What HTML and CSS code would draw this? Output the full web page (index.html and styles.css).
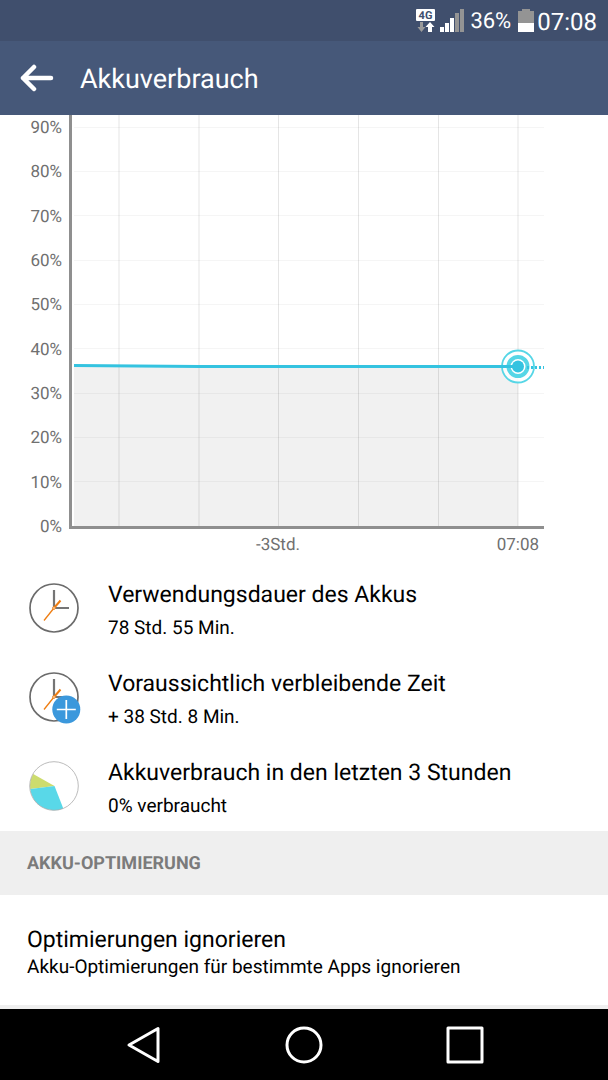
FILE: index.html
```html
<!DOCTYPE html>
<html lang="de">
<head>
  <meta charset="UTF-8">
  <meta name="viewport" content="width=device-width, initial-scale=1">
  <title>Akkuverbrauch</title>
  <link rel="stylesheet" href="styles.css">
</head>
<body>

  <div class="status-bar">
    <svg class="status-network" width="20" height="26" viewBox="0 0 20 26" aria-hidden="true">
      <rect x="0" y="1" width="19" height="12" rx="1" fill="#fff"/>
      <text x="9.500" y="11" text-anchor="middle" class="network-label">4G</text>
      <path d="M4 14h3v5h2.500l-4 5-4-5H4z" fill="#9a9a9a"/>
      <path d="M12 24h4v-5h2.500l-4.500-5-4.500 5H12z" fill="#fff"/>
    </svg>
    <svg class="status-signal" width="24" height="26" viewBox="0 0 24 26" aria-hidden="true">
      <path d="M0 19h4v5H0zM5 15h4v9H5zM10 10h4v14h-4z" fill="#fff"/>
      <path d="M15 5h4v19h-4zM20 1h4v23h-4z" fill="#949494"/>
    </svg>
    <span class="status-percent">36%</span>
    <svg class="status-battery" width="16" height="26" viewBox="0 0 16 26" aria-hidden="true">
      <path d="M4 1h8v2h4v12H0V3h4z" fill="#949494"/>
      <path d="M0 15h16v9H0z" fill="#fff"/>
    </svg>
    <span class="status-time">07:08</span>
  </div>

  <header class="app-bar">
    <button class="back-btn" type="button" aria-label="Zurück">
      <svg width="34" height="28" viewBox="0 0 34 28">
        <path d="M14 3L3 14l11 11M3 14h28" fill="none" stroke="#fff" stroke-width="4.500" stroke-linecap="round" stroke-linejoin="round"/>
      </svg>
    </button>
    <h1>Akkuverbrauch</h1>
  </header>

  <main>
    <!-- Battery level chart -->
    <section class="chart">
      <div class="y-axis">
        <span>90%</span>
        <span>80%</span>
        <span>70%</span>
        <span>60%</span>
        <span>50%</span>
        <span>40%</span>
        <span>30%</span>
        <span>20%</span>
        <span>10%</span>
        <span>0%</span>
      </div>
      <svg class="plot" viewBox="0 0 475 414" role="img" aria-label="Akkustand">
        <path d="M5 251L130 252H449V412H5z" fill="#f1f1f1"/>
        <path class="grid-h" d="M5 12.500H475M5 56.500H475M5 100.500H475M5 145.500H475M5 189.500H475M5 233.500H475M5 278.500H475M5 322.500H475M5 366.500H475"/>
        <path class="grid-v" d="M50 0V411M130 0V411M209.500 0V411M289.500 0V411M369.500 0V411M449 0V411"/>
        <path d="M0 0H3V411H475V414H0z" fill="#8f8f8f"/>
        <circle cx="449" cy="251.500" r="16" fill="#fff" fill-opacity=".8" stroke="#56d6e6" stroke-width="1.800"/>
        <circle cx="449" cy="251.500" r="9.500" fill="#fff" stroke="#56d6e6" stroke-width="4"/>
        <path d="M5 250.500L130 251.500H449" fill="none" stroke="#34c3e0" stroke-width="3"/>
        <path d="M458 252.500H475" fill="none" stroke="#34c3e0" stroke-width="3" stroke-dasharray="2 2"/>
        <circle cx="449" cy="251.500" r="6" fill="#34c3e0"/>
      </svg>
      <div class="x-axis">
        <span>-3Std.</span>
        <span class="now">07:08</span>
      </div>
    </section>

    <!-- Summary -->
    <ul class="stats">
      <li>
        <svg width="54" height="54" viewBox="0 0 54 54" aria-hidden="true">
          <circle cx="27" cy="27" r="24" fill="#fff" stroke="#6b6b6b" stroke-width="1.700"/>
          <path d="M27 9v18h15" fill="none" stroke="#757575" stroke-width="2.200"/>
          <path d="M17 39.500L27 27" stroke="#ee7d11" stroke-width="1.300"/>
          <path d="M27 27L33.500 19.500" stroke="#ee7d11" stroke-width="2"/>
          <circle cx="27" cy="27" r="1.300" fill="#fff" stroke="#ee7d11"/>
        </svg>
        <div class="stat-text">
          <h2>Verwendungsdauer des Akkus</h2>
          <p>78 Std. 55 Min.</p>
        </div>
      </li>
      <li>
        <svg width="54" height="54" viewBox="0 0 54 54" aria-hidden="true">
          <circle cx="27" cy="27" r="24" fill="#fff" stroke="#6b6b6b" stroke-width="1.700"/>
          <path d="M27 9v18h15" fill="none" stroke="#757575" stroke-width="2.200"/>
          <path d="M17 39.500L27 27" stroke="#ee7d11" stroke-width="1.300"/>
          <path d="M27 27L33.500 19.500" stroke="#ee7d11" stroke-width="2"/>
          <circle cx="27" cy="27" r="1.300" fill="#fff" stroke="#ee7d11"/>
          <circle cx="39.300" cy="39.500" r="14" fill="#3b98dc"/>
          <path d="M39.300 30v19M29.800 39.500h19" stroke="#fff" stroke-width="1.700"/>
        </svg>
        <div class="stat-text">
          <h2>Voraussichtlich verbleibende Zeit</h2>
          <p>+ 38 Std. 8 Min.</p>
        </div>
      </li>
      <li>
        <svg width="54" height="54" viewBox="0 0 54 54" aria-hidden="true">
          <circle cx="27" cy="27" r="24" fill="#fff"/>
          <path d="M27.500 27L6.200 15A24 24 0 0 0 3.200 30z" fill="#cddc6e"/>
          <path d="M27.500 27L3.200 30A24 24 0 0 0 36.300 49.500z" fill="#59d8e8"/>
          <circle cx="27" cy="27" r="24.300" fill="none" stroke="#ababab" stroke-width=".8"/>
        </svg>
        <div class="stat-text">
          <h2>Akkuverbrauch in den letzten 3 Stunden</h2>
          <p>0% verbraucht</p>
        </div>
      </li>
    </ul>

    <h3 class="section-title">AKKU-OPTIMIERUNG</h3>
    <a class="setting" href="#">
      <span class="setting-title">Optimierungen ignorieren</span>
      <span class="setting-summary">Akku-Optimierungen für bestimmte Apps ignorieren</span>
    </a>
  </main>

  <nav class="nav-bar">
    <button type="button" aria-label="Zurück">
      <svg width="40" height="40" viewBox="0 0 40 40">
        <path d="M5 20L34 3.500V36.500z" stroke-linejoin="round"/>
      </svg>
    </button>
    <button type="button" aria-label="Startseite">
      <svg width="40" height="40" viewBox="0 0 40 40">
        <circle cx="20" cy="20" r="17"/>
      </svg>
    </button>
    <button type="button" aria-label="Übersicht">
      <svg width="40" height="40" viewBox="0 0 40 40">
        <rect x="4" y="3" width="34" height="34" stroke-linejoin="round"/>
      </svg>
    </button>
  </nav>

</body>
</html>
```
FILE: styles.css
```css
/* Base */
* { box-sizing: border-box; margin: 0; padding: 0; }
body {
  font-family: Roboto, sans-serif;
  text-rendering: geometricPrecision;
  min-height: 100vh;
  display: flex;
  flex-direction: column;
  background: #efefef;
  color: #000;
}
button {
  border: none;
  background: none;
  cursor: pointer;
}
svg {
  display: block;
  flex-shrink: 0;
}

/* Status bar */
.status-bar {
  display: flex;
  align-items: center;
  justify-content: flex-end;
  height: 41px;
  padding-right: 11px;
  background: #404f6d;
  color: #fff;
}
.status-network { margin-right: 4px; }
.status-signal { margin-right: 6px; }
.status-percent {
  font-size: 22px;
  line-height: 26px;
  padding-top: 2px;
  margin-right: 7px;
}
.status-battery { margin-right: 3px; }
.status-time {
  font-size: 24px;
  line-height: 26px;
  padding-top: 2px;
}
.network-label {
  font-size: 11px;
  font-weight: 700;
  fill: #404f6d;
}

/* App bar */
.app-bar {
  display: flex;
  align-items: center;
  gap: 26px;
  height: 74px;
  padding: 0 20px;
  background: #465879;
  color: #fff;
}
h1 {
  padding-top: 2px;
  font-size: 27px;
  font-weight: 400;
}

main { background: #fff; }

/* Chart */
.chart {
  display: grid;
  grid-template-columns: 62px 1fr;
  column-gap: 7px;
  padding-right: 64px;
  font-size: 17px;
  line-height: 20px;
  color: #707070;
}
.y-axis {
  display: flex;
  flex-direction: column;
  justify-content: space-between;
  margin: 3px 0 -8px;
  text-align: right;
}
.plot {
  width: 100%;
  height: auto;
}
.grid-h {
  stroke: #000;
  stroke-opacity: .04;
}
.grid-v {
  stroke: #000;
  stroke-opacity: .1;
}
.x-axis {
  grid-column: 2;
  display: grid;
  grid-template-columns: 88% 1fr;
  padding: 6px 0 8px;
  text-align: center;
}
.now {
  padding-right: 5px;
  text-align: right;
}

/* Summary */
.stats {
  list-style: none;
  padding-bottom: 1px;
}
.stats li {
  display: flex;
  align-items: center;
  gap: 27px;
  height: 89px;
  padding: 0 27px;
}
.stat-text {
  display: flex;
  flex-direction: column;
  gap: 7px;
  padding-top: 3px;
}
h2 {
  font-size: 23px;
  font-weight: 400;
  line-height: 30px;
}
.stat-text p {
  font-size: 19px;
  line-height: 22px;
}

/* Settings */
.section-title {
  padding: 2px 27px 0;
  background: #efefef;
  color: #7b7b7b;
  font-size: 18px;
  font-weight: 700;
  line-height: 62px;
}
.setting {
  display: flex;
  flex-direction: column;
  padding: 30px 27px 26px;
  color: #000;
  text-decoration: none;
}
.setting-title {
  font-size: 23px;
  line-height: 30px;
}
.setting-summary {
  font-size: 19px;
  line-height: 24px;
}

/* Navigation bar */
.nav-bar {
  display: flex;
  justify-content: center;
  margin-top: auto;
  padding: 0 64px;
  background: #000;
}
.nav-bar button {
  display: flex;
  flex: 1;
  align-items: center;
  justify-content: center;
  height: 71px;
}
.nav-bar svg {
  fill: none;
  stroke: #fff;
  stroke-width: 3;
}
```
